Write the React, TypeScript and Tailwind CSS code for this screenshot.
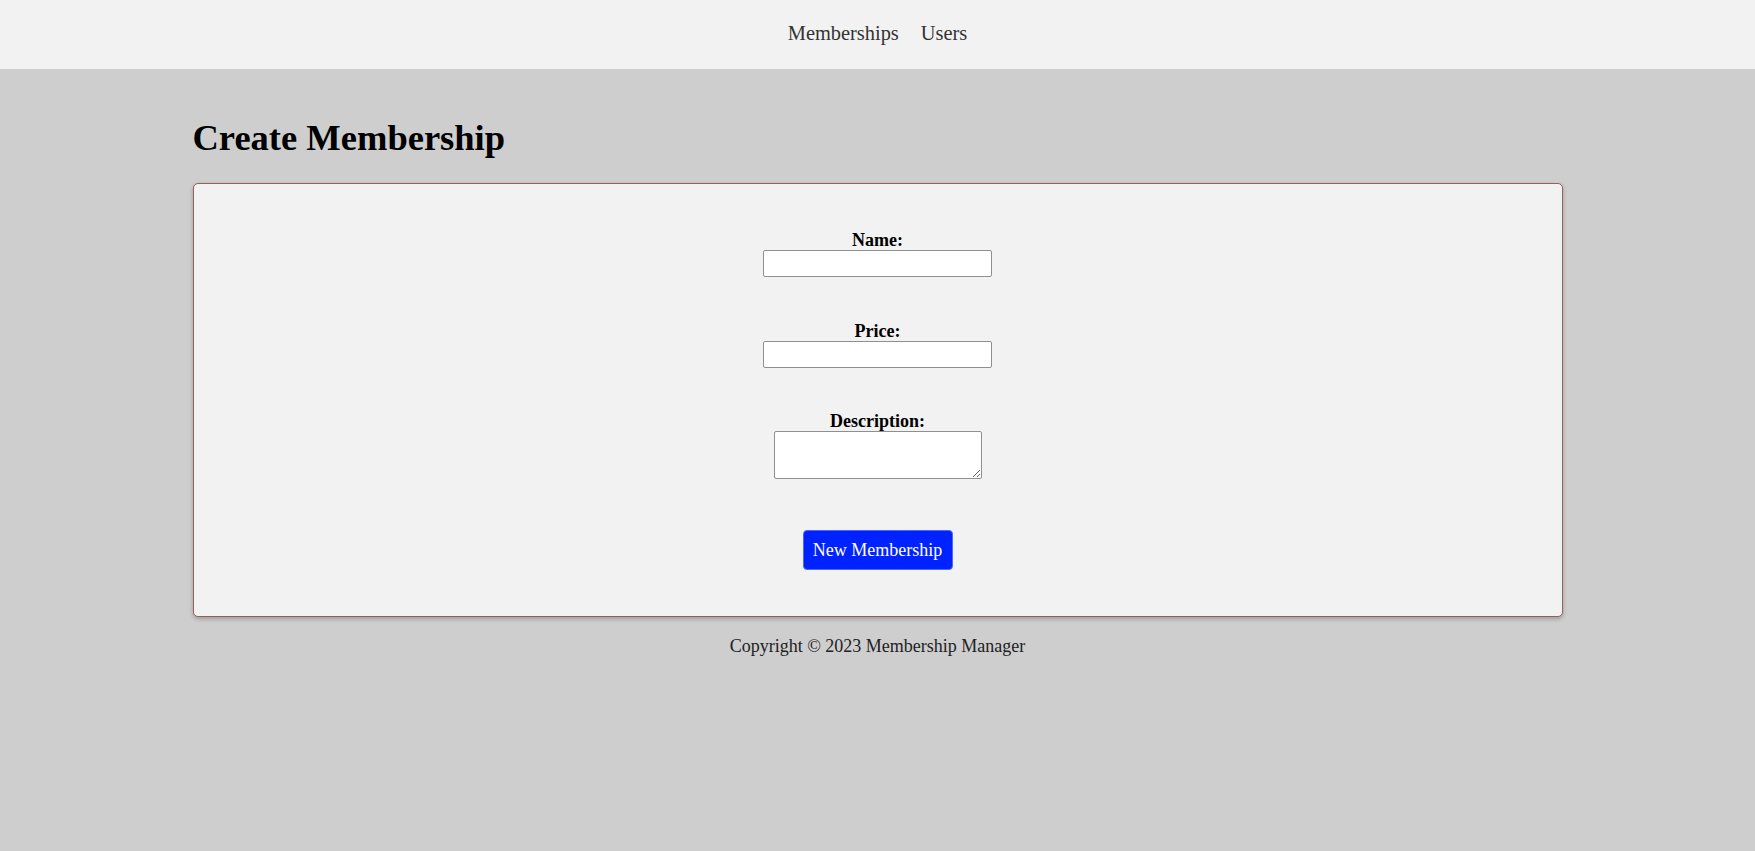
import React from "react";

export default function App() {
  return (
    <div className="min-h-[851px] bg-[#cecece] text-black" style={{ fontFamily: '"Liberation Serif", "Times New Roman", serif' }}>
      <header className="h-[69px] bg-[#f2f2f2] flex items-center justify-center gap-[22px] text-[20.4px] text-[#333] pb-[2px]">
        <a className="cursor-pointer">Memberships</a>
        <a className="cursor-pointer">Users</a>
      </header>
      <main className="w-[1370px] mx-auto">
        <h1 className="text-[36.5px] font-bold leading-[40px] pt-[49px] pb-[25px]">Create Membership</h1>
        <div className="bg-[#f2f2f2] border border-[#9a5c5c] rounded-[5px] shadow-[0_2px_4px_rgba(0,0,0,0.25)] h-[434px] flex flex-col items-center pt-[46px]">
          <label className="text-[18px] font-bold leading-[20px]">Name:</label>
          <input type="text" className="block w-[229px] h-[27px] bg-white border border-[#8f8f8f] rounded-[2px]" />
          <label className="text-[18px] font-bold leading-[20px] mt-[44px]">Price:</label>
          <input type="text" className="block w-[229px] h-[27px] bg-white border border-[#8f8f8f] rounded-[2px]" />
          <label className="text-[18px] font-bold leading-[20px] mt-[43px]">Description:</label>
          <textarea className="block w-[208px] h-[48px] bg-white border border-[#8f8f8f] rounded-[2px]" />
          <button className="mt-[51px] w-[150px] h-[40px] bg-[#0022ff] text-white text-[18px] rounded-[4px] border border-[#4d66ff]">New Membership</button>
        </div>
        <p className="text-center text-[18px] text-[#222] mt-[19px] leading-[20px]">Copyright © 2023 Membership Manager</p>
      </main>
    </div>
  );
}
